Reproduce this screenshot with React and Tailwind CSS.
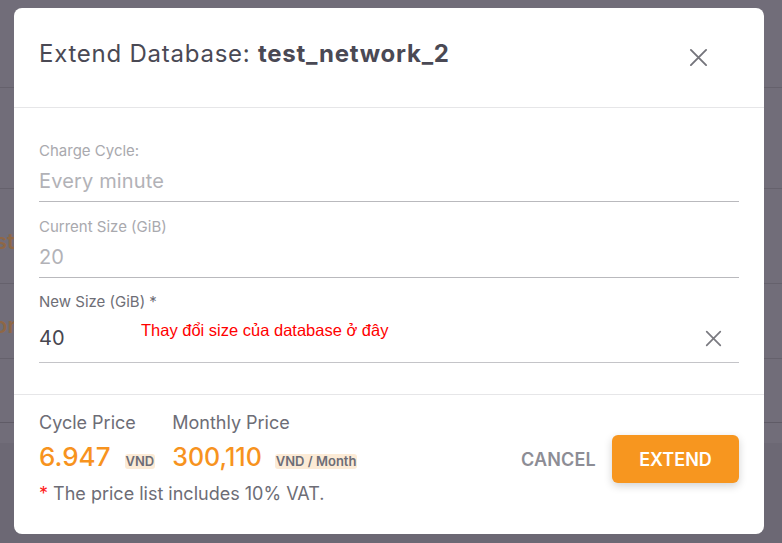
import React, { useState } from 'react';

function CloseIcon({ size = 20, className = '' }) {
  return (
    <svg width={size} height={size} viewBox="0 0 20 20" fill="none" className={className}>
      <path d="M2 2 L18 18 M18 2 L2 18" stroke="currentColor" strokeWidth="2" strokeLinecap="round" />
    </svg>
  );
}

function ReadField({ label, value }) {
  return (
    <div className="flex flex-col border-b border-[#b9b9bd] pb-[6px]">
      <label className="text-[15px] leading-[20px] text-[#a9a9ae]">{label}</label>
      <div className="mt-[6px] text-[20px] leading-[28px] tracking-[0.15px] text-[#b2b2b7]">{value}</div>
    </div>
  );
}

export default function App() {
  const [size, setSize] = useState('40');

  return (
    <div className="relative w-[782px] h-[543px] overflow-hidden bg-[#716d79] font-['Inter',sans-serif]">
      {/* page behind the dialog */}
      <div className="flex flex-col">
        <div className="h-[88px] border-b border-[#65616c]" />
        <div className="h-[101px] border-b border-[#65616c]" />
        <div className="h-[95px] border-b border-[#65616c] pt-[38px]">
          <span className="block -ml-[5px] text-[22px] leading-[28px] font-semibold text-[#8e6746]">st</span>
        </div>
        <div className="h-[75px] border-b border-[#65616c] pt-[27px]">
          <span className="block -ml-[6px] text-[22px] leading-[28px] font-semibold text-[#8e6746]">on</span>
        </div>
        <div className="h-[64px] border-b border-[#5f5b66]" />
        <div className="h-[20px]" />
        <div className="h-[100px] bg-[#6c6874]" />
      </div>

      {/* dialog */}
      <div className="absolute left-[14px] top-[8px] w-[750px] h-[526px] bg-white rounded-[8px] flex flex-col">
        <div className="h-[100px] border-b border-[#e6e6e8] px-[25px] pt-[30px] flex items-start justify-between">
          <h2 className="text-[24px] leading-[32px] tracking-[0.75px] text-[#4a4954]">
            Extend Database: <span className="font-bold">test_network_2</span>
          </h2>
          <button className="mt-[10px] mr-[31px] text-[#74747b]">
            <CloseIcon size={19} />
          </button>
        </div>

        <div className="relative flex flex-col px-[25px] pt-[33px] pb-[31px]">
          <ReadField label="Charge Cycle:" value="Every minute" />
          <div className="mt-[15px]">
            <ReadField label="Current Size (GiB)" value="20" />
          </div>
          <div className="mt-[14px] flex flex-col border-b border-[#c4c4c8] pb-[4px]">
            <label className="text-[15px] leading-[20px] text-[#6e6e76]">New Size (GiB) *</label>
            <div className="mt-[6px] h-[40px] flex items-center">
              <input
                value={size}
                onChange={(e) => setSize(e.target.value)}
                className="flex-1 text-[20px] leading-[28px] tracking-[0.15px] text-[#47464f] bg-transparent outline-none"
              />
              <button className="mr-[17px] text-[#7a7a80]" onClick={() => setSize('')}>
                <CloseIcon size={17} />
              </button>
            </div>
          </div>
          <span className="absolute left-[127px] top-[214px] text-[16.5px] leading-none text-[#ff0000] font-['Liberation_Sans',Arial,sans-serif]">
            Thay đổi size của database ở đây
          </span>
        </div>

        <div className="flex-1 border-t border-[#e6e6e8] px-[25px] pt-[16px] pb-[27px] flex items-start justify-between">
          <div className="flex flex-col">
            <div className="flex gap-[17px]">
              <div className="flex flex-col">
                <span className="text-[18px] leading-[24px] text-[#6d6d76]">Cycle Price</span>
                <div className="mt-[5px] flex items-baseline gap-[14px]">
                  <span className="text-[26px] leading-[34px] font-medium text-[#f7931e]">6.947</span>
                  <span className="px-[1px] rounded-[3px] bg-[#fcebd6] text-[13px] leading-[15px] font-semibold text-[#6d6d76]">VND</span>
                </div>
              </div>
              <div className="flex flex-col">
                <span className="text-[18px] leading-[24px] text-[#6d6d76]">Monthly Price</span>
                <div className="mt-[5px] flex items-baseline gap-[13px]">
                  <span className="text-[25px] leading-[34px] font-medium text-[#f7931e]">300,110</span>
                  <span className="px-[1px] rounded-[3px] bg-[#fcebd6] text-[13px] leading-[15px] font-semibold text-[#6d6d76]">VND / Month</span>
                </div>
              </div>
            </div>
            <p className="mt-[8px] text-[18px] leading-[24px] text-[#6d6d76]">
              <span className="text-[#ff1a1a]">*</span> The price list includes 10% VAT.
            </p>
          </div>

          <div className="mt-[24px] flex items-center gap-[16px]">
            <button className="text-[18px] font-semibold text-[#8d8d95] tracking-[0.2px]">CANCEL</button>
            <button className="w-[127px] h-[48px] rounded-[6px] bg-[#f7961f] text-white text-[18px] font-semibold shadow-[0_3px_8px_rgba(0,0,0,0.18)]">
              EXTEND
            </button>
          </div>
        </div>
      </div>
    </div>
  );
}
